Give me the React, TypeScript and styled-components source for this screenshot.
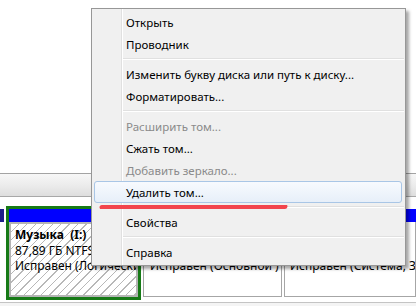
import React from "react";
import styled, { createGlobalStyle } from "styled-components";

const GlobalStyle = createGlobalStyle`
    html, body {
        margin: 0;
        padding: 0;
        background: #ffffff;
    }
    body {
        font-family: "Noto Sans", "Open Sans", Arial, sans-serif;
    }
`;

interface MenuEntry {
    label?: string,
    disabled?: boolean,
    active?: boolean,
    separator?: boolean,
}

const menuItems: MenuEntry[] = [
    { label: "Открыть" },
    { label: "Проводник" },
    { separator: true },
    { label: "Изменить букву диска или путь к диску..." },
    { label: "Форматировать..." },
    { separator: true },
    { label: "Расширить том...", disabled: true },
    { label: "Сжать том..." },
    { label: "Добавить зеркало...", disabled: true },
    { label: "Удалить том...", active: true },
    { separator: true },
    { label: "Свойства" },
    { separator: true },
    { label: "Справка" },
];

const Screen = styled.div`
    position: relative;
    width: 416px;
    height: 306px;
    overflow: hidden;
    background: #ffffff;
    display: flex;
    flex-direction: column;
`;

const TopSpace = styled.div`
    height: 173px;
    flex: none;
`;

const Band = styled.div`
    height: 22px;
    flex: none;
    border-top: 1px solid #a3a3a3;
    border-bottom: 1px solid #a8a8a8;
    background: linear-gradient(#f7f7f7, #ececec 50%, #dedede);
`;

const BandGap = styled.div`
    height: 9px;
    flex: none;
`;

const DiskRow = styled.div`
    height: 94px;
    flex: none;
    display: flex;
    gap: 2px;
`;

const Stub = styled.div`
    width: 4px;
    flex: none;
    padding: 3px 0;
    display: flex;
    flex-direction: column;
`;

const BlueBar = styled.div<{ $dark?: boolean }>`
    height: 13px;
    flex: none;
    background: ${(p) => (p.$dark ? "#1e1e8a" : "#0000ff")};
`;

const Selected = styled.div`
    width: 135px;
    flex: none;
    box-sizing: border-box;
    border: 3px solid #177a17;
    display: flex;
    flex-direction: column;
`;

const Partition = styled.div<{ $width?: number }>`
    ${(p) => (p.$width ? `width: ${p.$width}px; flex: none;` : "flex: 1;")}
    padding: 3px 0 3px 0;
    display: flex;
    flex-direction: column;
    min-width: 0;
`;

const Body = styled.div<{ $hatched?: boolean, $pad: number, $top?: number }>`
    flex: 1;
    min-height: 0;
    overflow: hidden;
    box-sizing: border-box;
    padding: ${(p) => p.$top ?? 3}px 0 0 ${(p) => p.$pad}px;
    border: ${(p) => (p.$hatched ? "2px solid #b4b4b4" : "1px solid #a6a6a6")};
    ${(p) => (p.$hatched ? "" : "border-top: none;")}
    background: ${(p) =>
        p.$hatched
            ? "repeating-linear-gradient(135deg, #ffffff 0px, #ffffff 5px, #b8b8b8 5px, #b8b8b8 6px)"
            : "#ffffff"};
    font-size: 12px;
    line-height: 15.5px;
    color: #000000;
    white-space: pre;
`;

const Label = styled.div<{ $bold?: boolean }>`
    font-weight: ${(p) => (p.$bold ? 700 : 400)};
    overflow: hidden;
`;

const Footer = styled.div`
    flex: 1;
    border-top: 2px solid #ffffff;
    box-shadow: inset 0 1px 0 #c4c4c4;
    background: #f4f4f4;
`;

const Menu = styled.div`
    position: absolute;
    left: 91px;
    top: 8px;
    width: 315px;
    box-sizing: border-box;
    padding: 2px 0;
    border: 1px solid #979797;
    background:
        linear-gradient(to right, transparent 29px, #e0e0e0 29px, #e0e0e0 30px, #ffffff 30px, #ffffff 31px, transparent 31px),
        #f0f0f0;
    box-shadow: 3px 3px 3px rgba(0, 0, 0, 0.35);
    font-size: 11.5px;
    z-index: 2;
`;

const Item = styled.div<{ $disabled?: boolean, $active?: boolean }>`
    height: 22px;
    box-sizing: border-box;
    margin: 0 3px 0 2px;
    padding-left: 31px;
    display: flex;
    align-items: center;
    border: 1px solid ${(p) => (p.$active ? "#a9c6e6" : "transparent")};
    border-radius: 3px;
    background: ${(p) => (p.$active ? "linear-gradient(#f7fafe, #e7eff9)" : "transparent")};
    color: ${(p) => (p.$disabled ? "#8a8a8a" : "#000000")};
    white-space: nowrap;
`;

const Separator = styled.div`
    height: 8px;
    margin: 0 1px 0 31px;
    display: flex;
    flex-direction: column;
    justify-content: center;

    &::before {
        content: "";
        height: 1px;
        background: #e0e0e0;
    }
    &::after {
        content: "";
        height: 1px;
        background: #ffffff;
    }
`;

const Marker = styled.svg`
    position: absolute;
    left: 97px;
    top: 201px;
    z-index: 3;
`;

const ContextMenu = () => (
    <Menu>
        {menuItems.map((m, i) =>
            m.separator ? (
                <Separator key={i} />
            ) : (
                <Item key={i} $disabled={m.disabled} $active={m.active}>
                    {m.label}
                </Item>
            )
        )}
    </Menu>
);

export default function App() {
    return (
        <>
            <GlobalStyle />
            <Screen>
                <TopSpace />
                <Band />
                <BandGap />
                <DiskRow>
                    <Stub>
                        <BlueBar $dark />
                    </Stub>
                    <Selected>
                        <BlueBar />
                        <Body $hatched $pad={4}>
                            <Label $bold>{"Музыка  (I:)"}</Label>
                            <Label>87,89 ГБ NTFS</Label>
                            <Label>Исправен (Логический раздел)</Label>
                        </Body>
                    </Selected>
                    <Partition $width={139}>
                        <BlueBar />
                        <Body $pad={6} $top={36}>
                            <Label>Исправен (Основной )</Label>
                        </Body>
                    </Partition>
                    <Partition>
                        <BlueBar />
                        <Body $pad={5} $top={36}>
                            <Label>Исправен (Система, Загрузка, Файл подкачки)</Label>
                        </Body>
                    </Partition>
                </DiskRow>
                <Footer />
                <ContextMenu />
                <Marker width="194" height="12" viewBox="0 0 194 12">
                    <defs>
                        <filter id="soft" x="-5%" y="-100%" width="110%" height="300%">
                            <feGaussianBlur stdDeviation="0.6" />
                        </filter>
                    </defs>
                    <path
                        d="M5 6.5 C 60 5.6, 130 5.2, 188 5.6"
                        stroke="#f2444e"
                        strokeWidth="5"
                        strokeLinecap="round"
                        fill="none"
                        filter="url(#soft)"
                    />
                </Marker>
            </Screen>
        </>
    );
}
